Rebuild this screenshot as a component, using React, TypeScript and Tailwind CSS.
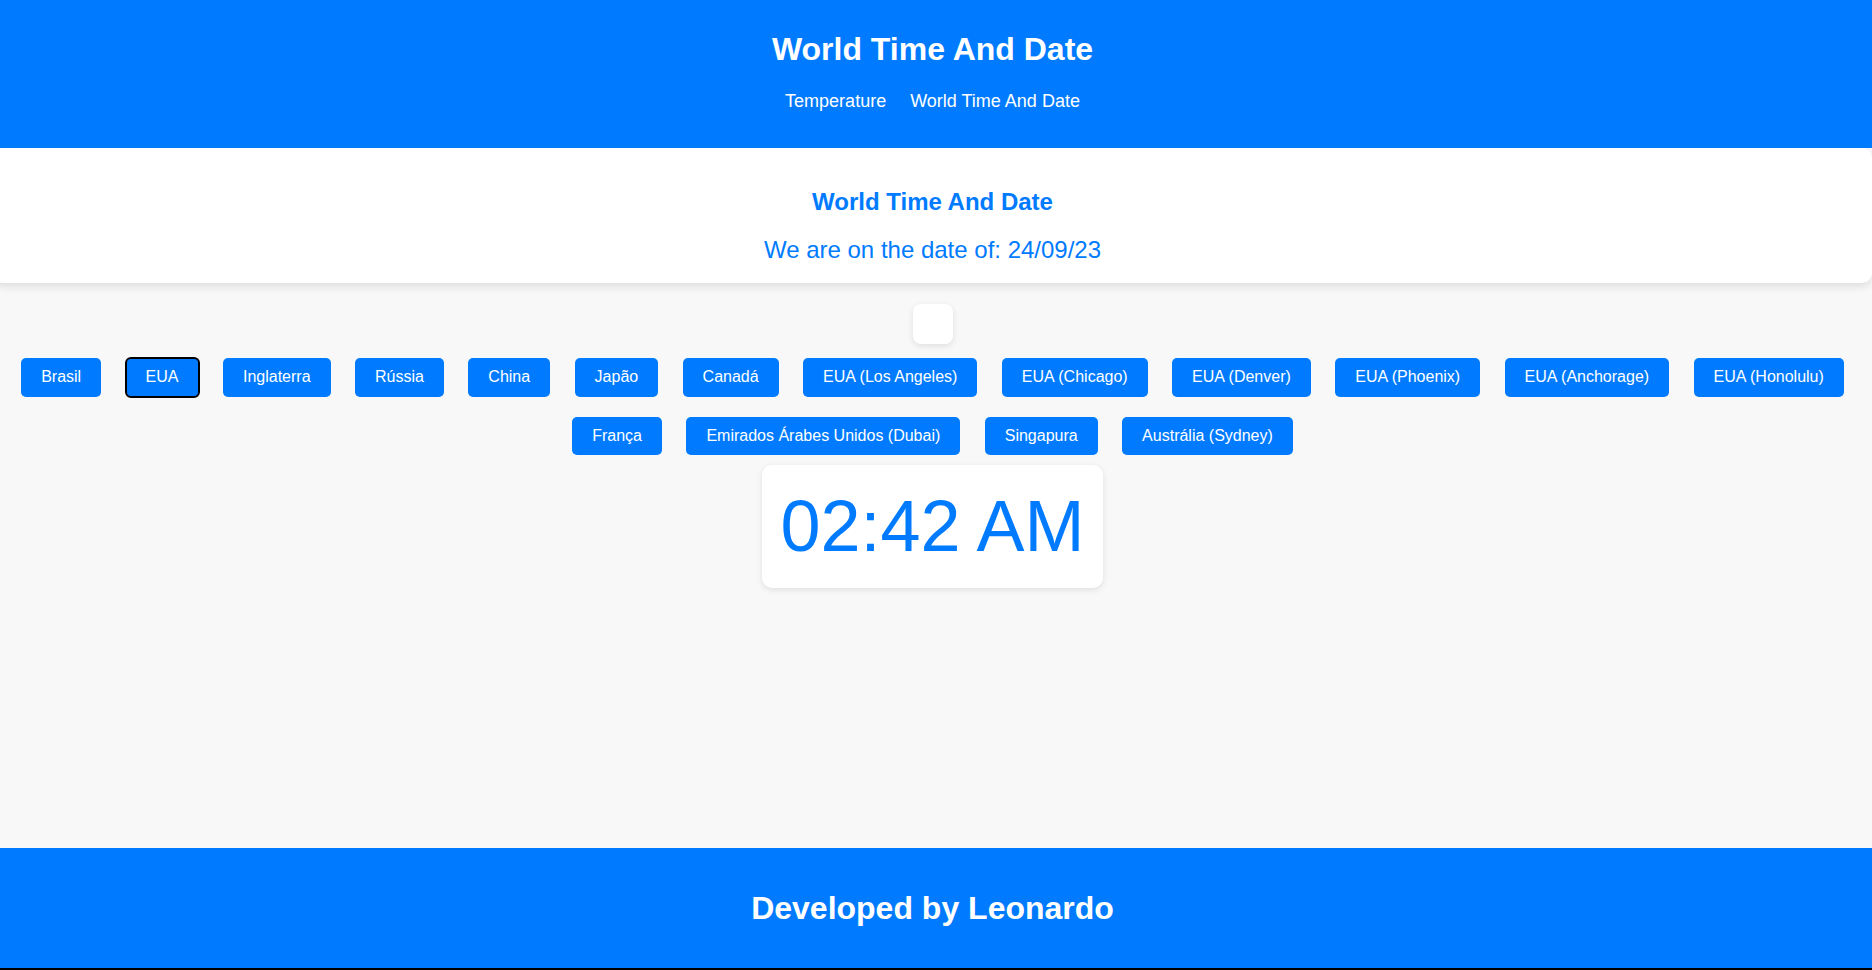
const countries = [
  "Brasil",
  "EUA",
  "Inglaterra",
  "Rússia",
  "China",
  "Japão",
  "Canadá",
  "EUA (Los Angeles)",
  "EUA (Chicago)",
  "EUA (Denver)",
  "EUA (Phoenix)",
  "EUA (Anchorage)",
  "EUA (Honolulu)",
  "França",
  "Emirados Árabes Unidos (Dubai)",
  "Singapura",
  "Austrália (Sydney)",
];

export default function App() {
  return (
    <div className="min-h-screen bg-black flex flex-col overflow-hidden font-['Liberation_Sans',Arial,sans-serif]">
      <div className="flex-1 mb-[2px] -ml-[7px] w-[calc(100%+7px)] flex flex-col bg-[#f8f8f8]">
        <header className="bg-[#007bff] text-white flex flex-col items-center pt-[31px] pb-[36px]">
          <h1 className="text-[32px] font-bold leading-[37px]">World Time And Date</h1>
          <nav className="mt-[23px] flex gap-[24px] text-[18px] leading-[21px]">
            <a href="#">Temperature</a>
            <a href="#">World Time And Date</a>
          </nav>
        </header>
        <section className="relative z-10 bg-white rounded-[10px] shadow-[0_4px_8px_rgba(0,0,0,0.1)] p-[20px] text-center text-[#007bff]">
          <h2 className="text-[24px] font-bold leading-[27.6px] mt-[20px] mb-[20px]">World Time And Date</h2>
          <p className="text-[24px] leading-[27.6px]">We are on the date of: 24/09/23</p>
        </section>
        <main className="flex-1 flex flex-col items-center">
          <div className="mt-[21px] mb-[4px] w-[40px] h-[40px] bg-white rounded-[8px] shadow-[0_2px_6px_rgba(0,0,0,0.1)]" />
          <div className="w-full flex flex-wrap justify-center gap-x-[4.45px]">
            {countries.map((c) => (
              <button
                key={c}
                className={
                  c === "EUA"
                    ? "m-[10px] px-[20px] py-[10px] bg-[#007bff] text-white text-[16px] leading-[18.4px] rounded-[5px] outline-2 outline-solid outline-black outline-offset-[-1px]"
                    : "m-[10px] px-[20px] py-[10px] bg-[#007bff] text-white text-[16px] leading-[18.4px] rounded-[5px]"
                }
              >
                {c}
              </button>
            ))}
          </div>
          <div className="bg-white rounded-[10px] shadow-[0_2px_6px_rgba(0,0,0,0.1)] px-[18.5px] py-[20px] text-[72px] leading-[82.8px] text-[#007bff]">
            02:42 AM
          </div>
        </main>
        <footer className="bg-[#007bff] h-[120px] flex items-center justify-center text-white text-[32px] font-bold">
          Developed by Leonardo
        </footer>
      </div>
    </div>
  );
}
